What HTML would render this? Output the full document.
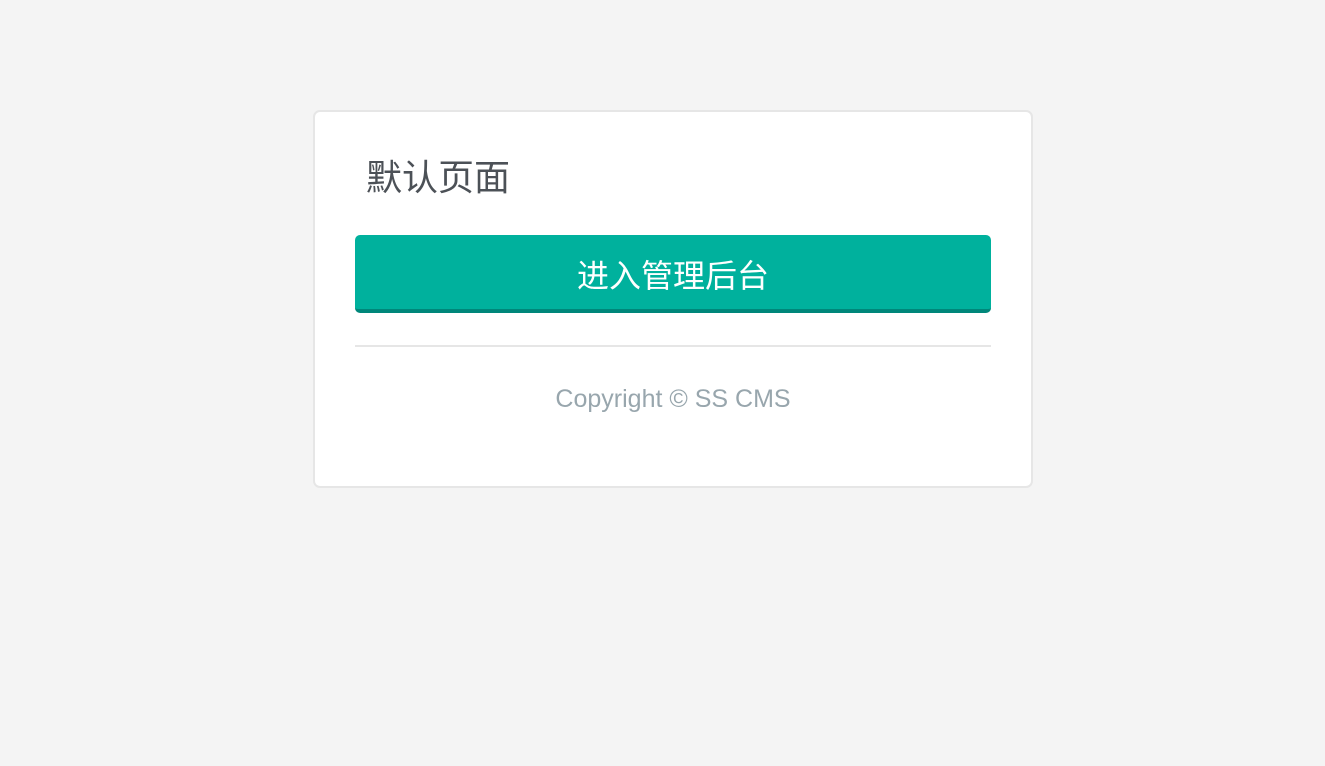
<!DOCTYPE html>
<html><head><meta charset="utf-8"><style>
body{margin:0;background:#f4f4f4;width:1325px;height:766px;font-family:"Liberation Sans","Noto Sans CJK SC",sans-serif;}
.card{position:absolute;left:313px;top:110px;width:716px;height:374px;background:#fff;border:2px solid #e6e6e6;border-radius:7px;}
.t{position:absolute;left:51px;top:41px;font-size:36px;color:#4c5157;line-height:50px;}
.b{position:absolute;left:40px;top:123px;width:636px;height:74px;background:#00b19d;border-bottom:4px solid #00877a;border-radius:5px;color:#fff;font-size:32px;text-align:center;line-height:82px;}
.hr{position:absolute;left:40px;top:233px;width:636px;height:2px;background:#e6e6e6;}
.c{position:absolute;left:0;width:716px;top:269px;text-align:center;font-size:25px;color:#98a6ad;line-height:36px;}
</style></head><body>
<div class="card">
<div class="t">默认页面</div>
<div class="b">进入管理后台</div>
<div class="hr"></div>
<div class="c">Copyright © SS CMS</div>
</div>
</body></html>
